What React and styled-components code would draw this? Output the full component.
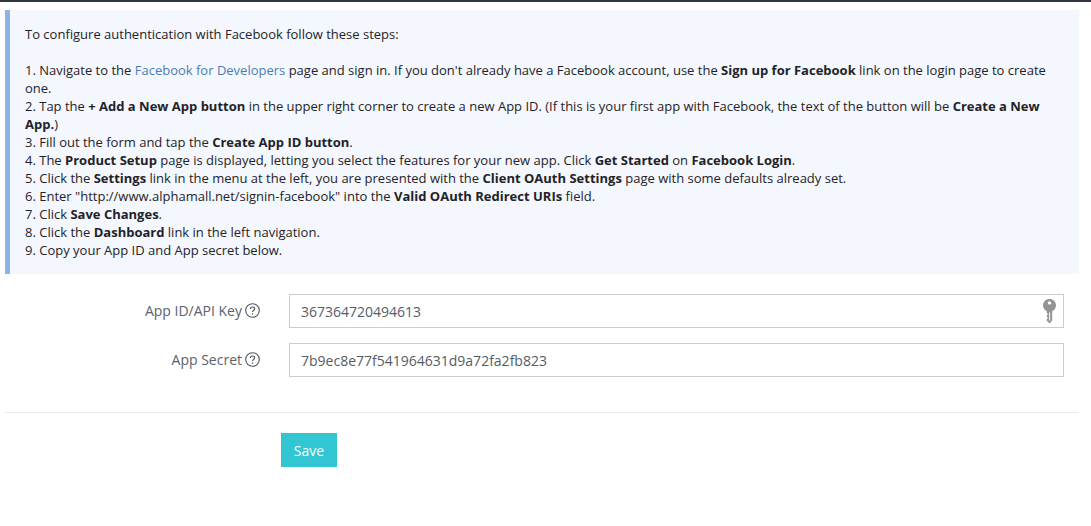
import React from "react"
import styled, { createGlobalStyle } from "styled-components"

const GlobalStyle = createGlobalStyle`
  html, body {
    margin: 0;
    padding: 0;
    background: #fff;
  }
  body {
    font-family: "Open Sans", sans-serif;
    font-size: 13px;
    line-height: 18px;
    color: #1f2329;
  }
`

const Page = styled.div`
  border-top: 2px solid #2f3640;
  padding: 8px 12px 0 5px;
  height: 524px;
  box-sizing: border-box;
`

const Notice = styled.div`
  background: #f4f7fd;
  border-left: 5px solid #8cb3e6;
  padding: 15px;
`

const Line = styled.div`
  min-height: 18px;
`

const DocLink = styled.a`
  color: #4a7db5;
  text-decoration: none;
`

const Form = styled.div`
  display: flex;
  flex-direction: column;
  gap: 15px;
  margin-top: 20px;
  padding-right: 15px;
`

const Row = styled.div`
  display: grid;
  grid-template-columns: 255px 1fr;
  column-gap: 29px;
  align-items: center;
`

const Label = styled.label`
  display: flex;
  justify-content: flex-end;
  align-items: center;
  gap: 3px;
  font-size: 14px;
  color: #5a626b;
`

const HelpIcon = styled.svg`
  width: 15px;
  height: 15px;
  flex: none;
  position: relative;
  top: -1px;
`

const InputWrap = styled.div`
  position: relative;
`

const Field = styled.input`
  display: block;
  width: 100%;
  height: 34px;
  box-sizing: border-box;
  border: 1px solid #cccccc;
  padding: 0 11px;
  font-family: "Open Sans", sans-serif;
  font-size: 14px;
  color: #555c64;
  background: #fff;
  outline: none;
`

const KeyIcon = styled.svg`
  position: absolute;
  top: 5px;
  right: 8px;
  width: 13px;
  height: 25px;
`

const Divider = styled.hr`
  border: 0;
  border-top: 1px solid #e9ebef;
  margin: 35px 0 20px;
`

const SaveButton = styled.button`
  display: block;
  margin-left: 276px;
  width: 56px;
  height: 34px;
  border: 0;
  padding: 0;
  background: #32c6d3;
  color: #fff;
  font-family: "Open Sans", sans-serif;
  font-size: 14px;
`

const Help = () => (
  <HelpIcon viewBox="0 0 15 15" fill="none">
    <circle cx="7.5" cy="7.5" r="6.8" stroke="#4f575f" strokeWidth="1.1" />
    <path d="M5.4 5.9C5.4 4.7 6.3 4 7.5 4s2.1.8 2.1 1.8c0 1.7-2.1 1.6-2.1 3.3" stroke="#4f575f" strokeWidth="1.2" />
    <circle cx="7.5" cy="11" r=".8" fill="#4f575f" />
  </HelpIcon>
)

const Key = () => (
  <KeyIcon viewBox="0 0 13 25">
    <path
      fillRule="evenodd"
      fill="#949494"
      d="M6.5 0C10 0 13 2.6 13 6.2c0 2.9-1.7 5-3.8 6V21.5L6.5 24.5 3.8 21.7V20L5 18.9 3.8 17.8V16.4L5 15.3 3.8 14.2V12.2C1.7 11.2 0 9.1 0 6.2 0 2.6 3 0 6.5 0ZM6.5 2.2a1.7 1.7 0 1 0 0 3.4 1.7 1.7 0 0 0 0-3.4ZM6.1 13.5V21.5H7.1V13.5Z"
    />
  </KeyIcon>
)

const App = () => {
  return (
    <Page>
      <GlobalStyle />
      <Notice>
        <Line>To configure authentication with Facebook follow these steps:</Line>
        <Line />
        <Line>
          1. Navigate to the <DocLink href="#">Facebook for Developers</DocLink> page and sign in. If you don't already have a Facebook account, use the <b>Sign up for Facebook</b> link on the login page to create one.
        </Line>
        <Line>
          2. Tap the <b>+ Add a New App button</b> in the upper right corner to create a new App ID. (If this is your first app with Facebook, the text of the button will be <b>Create a New App.</b>)
        </Line>
        <Line>
          3. Fill out the form and tap the <b>Create App ID button</b>.
        </Line>
        <Line>
          4. The <b>Product Setup</b> page is displayed, letting you select the features for your new app. Click <b>Get Started</b> on <b>Facebook Login</b>.
        </Line>
        <Line>
          5. Click the <b>Settings</b> link in the menu at the left, you are presented with the <b>Client OAuth Settings</b> page with some defaults already set.
        </Line>
        <Line>
          6. Enter "http://www.alphamall.net/signin-facebook" into the <b>Valid OAuth Redirect URIs</b> field.
        </Line>
        <Line>
          7. Click <b>Save Changes</b>.
        </Line>
        <Line>
          8. Click the <b>Dashboard</b> link in the left navigation.
        </Line>
        <Line>9. Copy your App ID and App secret below.</Line>
      </Notice>
      <Form>
        <Row>
          <Label>
            App ID/API Key
            <Help />
          </Label>
          <InputWrap>
            <Field defaultValue="367364720494613" />
            <Key />
          </InputWrap>
        </Row>
        <Row>
          <Label>
            App Secret
            <Help />
          </Label>
          <InputWrap>
            <Field defaultValue="7b9ec8e77f541964631d9a72fa2fb823" />
          </InputWrap>
        </Row>
      </Form>
      <Divider />
      <SaveButton>Save</SaveButton>
    </Page>
  )
}

export default App
